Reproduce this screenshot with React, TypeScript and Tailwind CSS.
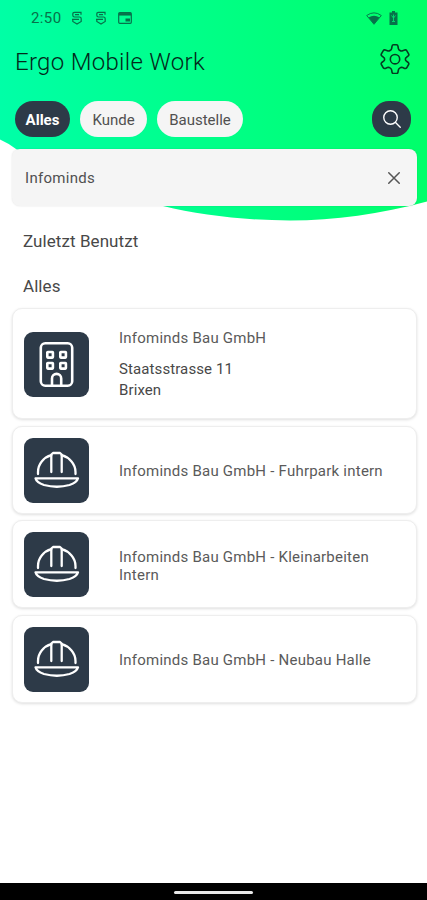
import type { ReactNode } from "react";
import { IoCloseOutline, IoSearchOutline } from "react-icons/io5";

type Entry = {
  name: string;
  kind: "customer" | "site";
  address?: string[];
};

const entries: Entry[] = [
  {
    name: "Infominds Bau GmbH",
    kind: "customer",
    address: ["Staatsstrasse 11", "Brixen"],
  },
  { name: "Infominds Bau GmbH - Fuhrpark intern", kind: "site" },
  { name: "Infominds Bau GmbH - Kleinarbeiten Intern", kind: "site" },
  { name: "Infominds Bau GmbH - Neubau Halle", kind: "site" },
];

const filters = [
  { label: "Alles", className: "w-[55px] bg-[#2d3a48] text-white font-bold" },
  { label: "Kunde", className: "w-[67px] bg-[#f5f5f5] text-[#505050]" },
  { label: "Baustelle", className: "w-[86px] bg-[#f5f5f5] text-[#505050]" },
];

function HeaderWave() {
  return (
    <svg className="absolute inset-x-0 top-0 -z-10" width="427" height="222" viewBox="0 0 427 222">
      <defs>
        <linearGradient id="wave" gradientUnits="userSpaceOnUse" x1="0" y1="130" x2="427" y2="60">
          <stop offset="0" stopColor="#00ffa8" />
          <stop offset="0.5" stopColor="#00ff87" />
          <stop offset="1" stopColor="#00ff68" />
        </linearGradient>
      </defs>
      <path
        d="M0 0H427V201.500C380 214 335 220.500 290 220.500C245 220.500 200 215 163 206C110 192 50 170 16 149Q8 143 0 139.500Z"
        fill="url(#wave)"
      />
    </svg>
  );
}

function NotificationIcon() {
  return (
    <svg width="12" height="14" viewBox="0 0 12 14" fill="none" stroke="currentColor" strokeWidth="1.200">
      <path d="M10 3.800V1.300H3.500Q1.800 1.300 1.800 3V4.300Q1.800 6 3.500 6H8.500Q10.200 6 10.200 7.700V10.500L6 13L1.800 10.500V9M4 3.600H8M1 8.300H8" />
    </svg>
  );
}

function GearIcon() {
  return (
    <svg
      width="30"
      height="30"
      viewBox="5 5 30 30"
      fill="none"
      stroke="currentColor"
      strokeWidth="1.600"
      strokeLinejoin="round"
    >
      <path d="M17 7.300Q17.200 5.800 18.500 5.800H21.500Q22.800 5.800 23 7.300L23.300 9.300Q23.600 10.800 25 11.500Q26.200 12.300 27.600 11.800L29.700 11Q31 10.500 31.700 11.600L33.600 14.900Q34.200 16 33.200 16.900L31.400 18.300Q30.400 19 30.400 20.200Q30.400 21.400 31.400 22.100L33.200 23.500Q34.200 24.400 33.600 25.500L31.700 28.800Q31 29.900 29.700 29.400L27.600 28.600Q26.200 28.100 25 28.900Q23.600 29.600 23.300 31.100L23 33.100Q22.800 34.600 21.500 34.600H18.500Q17.200 34.600 17 33.100L16.700 31.100Q16.400 29.600 15 28.900Q13.800 28.100 12.400 28.600L10.300 29.400Q9 29.900 8.300 28.800L6.400 25.500Q5.800 24.400 6.800 23.500L8.600 22.100Q9.600 21.400 9.600 20.200Q9.600 19 8.600 18.300L6.800 16.900Q5.800 16 6.400 14.900L8.300 11.600Q9 10.500 10.300 11L12.400 11.800Q13.800 12.300 15 11.500Q16.400 10.800 16.700 9.300Z" />
      <circle cx="20" cy="20.200" r="4.700" />
    </svg>
  );
}

function StatusBar() {
  return (
    <div className="flex h-9 items-center pl-[31px] pr-[29px] text-[#07714a]">
      <span className="w-10 text-[15px] tracking-[0.4px]">2:50</span>
      <NotificationIcon />
      <span className="w-3" />
      <NotificationIcon />
      <svg className="ml-[11px]" width="14" height="12" viewBox="0 0 14 12" fill="none" stroke="currentColor">
        <rect x="0.700" y="0.700" width="12.600" height="10.600" rx="1" strokeWidth="1.200" />
        <path d="M1 2.300H13" strokeWidth="2.500" />
        <path d="M7.500 8H12" strokeWidth="3" />
      </svg>
      <svg className="ml-auto" width="16" height="13" viewBox="0 0 16 13" fill="none">
        <path d="M0.700 3.500Q8 -1.800 15.300 3.500L8 12.300Z" stroke="currentColor" strokeWidth="0.900" />
        <path d="M2.500 5.500Q8 1.800 13.500 5.500L8 12.300Z" fill="currentColor" />
      </svg>
      <svg className="ml-[7px]" width="9" height="14" viewBox="0 0 9 14">
        <path d="M3 0H6V1.500H8.500V14H0.500V1.500H3Z" fill="currentColor" />
        <path d="M4.500 3.500V10M2.500 4.500L4.500 7L6.500 4.500M3 10.500H6" fill="none" stroke="#00e270" strokeWidth="0.900" />
      </svg>
    </div>
  );
}

function BuildingIcon() {
  return (
    <svg width="65" height="65" viewBox="0 0 65 65" fill="none" stroke="white" strokeWidth="2.600" strokeLinejoin="round">
      <rect x="16.800" y="11.300" width="31.400" height="42.400" rx="4.500" />
      <rect x="23.300" y="20" width="5.600" height="5.600" rx="0.500" />
      <rect x="36.300" y="20" width="5.600" height="5.600" rx="0.500" />
      <rect x="23.300" y="31" width="5.600" height="5.600" rx="0.500" />
      <rect x="36.300" y="31" width="5.600" height="5.600" rx="0.500" />
      <path d="M28 53V46.500a4.600 4.600 0 0 1 9.200 0V53" />
    </svg>
  );
}

function HelmetIcon() {
  return (
    <svg
      width="65"
      height="65"
      viewBox="0 0 65 65"
      fill="none"
      stroke="white"
      strokeWidth="2.300"
      strokeLinecap="round"
      strokeLinejoin="round"
    >
      <path d="M14 36V34C14 26 19.500 19.500 27.300 17.200M37.700 17.200C45.500 19.500 51.500 26 51.500 34V36" />
      <path d="M27.300 34V16.500L29 15H36L37.700 16.500V34" />
      <path d="M11.500 40.300H54Q53 44.500 45.500 47Q33 50.500 20 47Q12.500 44.500 11.500 40.300Z" />
    </svg>
  );
}

function IconTile({ children }: { children: ReactNode }) {
  return <div className="size-[65px] shrink-0 overflow-hidden rounded-[9px] bg-[#2d3a48]">{children}</div>;
}

function EntryCard({ entry }: { entry: Entry }) {
  return (
    <li
      className={`flex items-center rounded-[10px] border border-[#eeeeee] bg-white pl-[11px] pr-7 pt-px shadow-[0_1px_3px_rgba(0,0,0,0.13)] ${
        entry.address ? "h-[111px]" : "h-[88px]"
      }`}
    >
      <IconTile>{entry.kind === "customer" ? <BuildingIcon /> : <HelmetIcon />}</IconTile>
      <div className="ml-[30px] pt-[2px] text-[15px] leading-[18px] tracking-[0.23px] text-[#5a5a5a]">
        <p>{entry.name}</p>
        {entry.address && (
          <div className="mt-3 leading-[21px] tracking-[0.1px] text-[#484848]">
            {entry.address.map((line) => (
              <p key={line}>{line}</p>
            ))}
          </div>
        )}
      </div>
    </li>
  );
}

export default function App() {
  return (
    <div className="relative isolate flex h-[900px] w-[427px] flex-col overflow-hidden bg-white font-[Roboto,sans-serif]">
      <HeaderWave />
      <StatusBar />

      {/* Title */}
      <header className="flex h-[50px] items-center justify-between pl-[15px] pr-[17px]">
        <h1 className="pt-0.5 text-[24px] font-light tracking-[0.3px] text-[#03291a]">Ergo Mobile Work</h1>
        <span className="mb-1 text-[#043d22]">
          <GearIcon />
        </span>
      </header>

      {/* Filters */}
      <div className="mt-[15px] flex h-9 items-center gap-[10px] pl-[15px] pr-4">
        {filters.map((filter) => (
          <button key={filter.label} className={`h-9 rounded-[18px] pt-0.5 text-[15px] ${filter.className}`}>
            {filter.label}
          </button>
        ))}
        <button className="ml-auto flex h-9 w-[39px] items-center justify-center rounded-[17px] bg-[#2d3a48] text-white">
          <IoSearchOutline className="size-[22px]" />
        </button>
      </div>

      {/* Search */}
      <div className="ml-3 mr-[10px] mt-3 flex h-[57px] items-center justify-between rounded-[8px] bg-[#f5f5f5] pl-[13px] pr-[11px] shadow-[0_0_2px_rgba(0,0,0,0.12)]">
        <span className="pt-0.5 text-[15px] tracking-[0.3px] text-[#505050]">Infominds</span>
        <IoCloseOutline className="size-6 text-[#555]" />
      </div>

      <h2 className="ml-[23px] mt-6 text-[17px] leading-[22px] tracking-[0.07px] text-[#484848]">Zuletzt Benutzt</h2>
      <h2 className="ml-[23px] mt-[23px] text-[17px] leading-[22px] tracking-[0.07px] text-[#484848]">Alles</h2>

      <ul className="ml-3 mr-[10px] mt-[11px] flex flex-col gap-[6.500px]">
        {entries.map((entry) => (
          <EntryCard key={entry.name} entry={entry} />
        ))}
      </ul>

      {/* Navigation bar */}
      <div className="mt-auto flex h-[17px] items-center justify-center bg-black pt-0.5">
        <div className="h-[3px] w-[79px] rounded-full bg-[#e8e8e8]" />
      </div>
    </div>
  );
}
